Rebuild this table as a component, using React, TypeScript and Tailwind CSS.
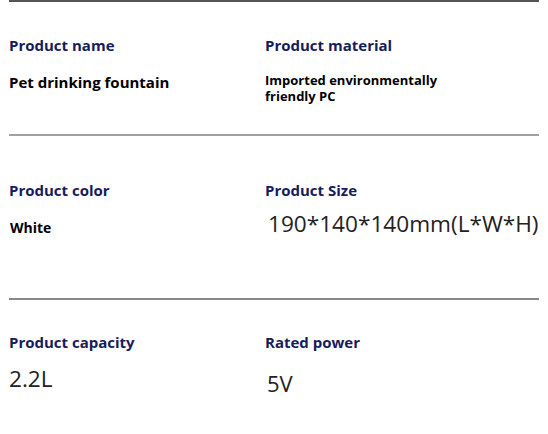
import React from "react";

interface Spec {
  label: string;
  value: string;
  valueClass: string;
}

const rows: { pt: string; left: Spec; right: Spec }[] = [
  {
    pt: "pt-[33px]",
    left: {
      label: "Product name",
      value: "Pet drinking fountain",
      valueClass: "mt-[17px] text-[15px] leading-[20px] font-bold text-black",
    },
    right: {
      label: "Product material",
      value: "Imported environmentally friendly PC",
      valueClass: "mt-[17px] w-[180px] text-[13px] leading-[16px] font-bold text-black",
    },
  },
  {
    pt: "pt-[44px]",
    left: {
      label: "Product color",
      value: "White",
      valueClass: "mt-[18px] pl-[1px] text-[14px] leading-[20px] font-bold text-black",
    },
    right: {
      label: "Product Size",
      value: "190*140*140mm(L*W*H)",
      valueClass: "mt-[10px] pl-[3px] text-[22.6px] leading-[28px] text-[#222]",
    },
  },
  {
    pt: "pt-[32px]",
    left: {
      label: "Product capacity",
      value: "2.2L",
      valueClass: "mt-[13px] text-[22.6px] leading-[28px] text-[#222]",
    },
    right: {
      label: "Rated power",
      value: "5V",
      valueClass: "mt-[17px] pl-[2px] text-[22px] leading-[28px] text-[#222]",
    },
  },
];

const Cell: React.FC<{ spec: Spec }> = ({ spec }) => (
  <div className="flex flex-col items-start">
    <div className="text-[15px] leading-[20px] font-bold text-[#161c5c]">
      {spec.label}
    </div>
    <div className={spec.valueClass}>{spec.value}</div>
  </div>
);

const App: React.FC = () => {
  return (
    <div
      className="w-[548px] h-[434px] bg-white overflow-hidden"
      style={{ fontFamily: '"Open Sans", "Noto Sans", sans-serif' }}
    >
      {rows.map((row, i) => (
        <div key={i}>
          {/* Divider */}
          <div
            className={`mx-[9px] h-[2px] ${
              i === 0 ? "bg-[#555]" : i === 1 ? "bg-[#a0a0a0]" : "bg-[#888]"
            }`}
          ></div>
          <div
            className={`grid grid-cols-[256px_1fr] px-[9px] ${row.pt} ${
              i === 0 ? "h-[132px]" : i === 1 ? "h-[162px]" : ""
            }`}
          >
            <Cell spec={row.left} />
            <Cell spec={row.right} />
          </div>
        </div>
      ))}
    </div>
  );
};

export default App;
